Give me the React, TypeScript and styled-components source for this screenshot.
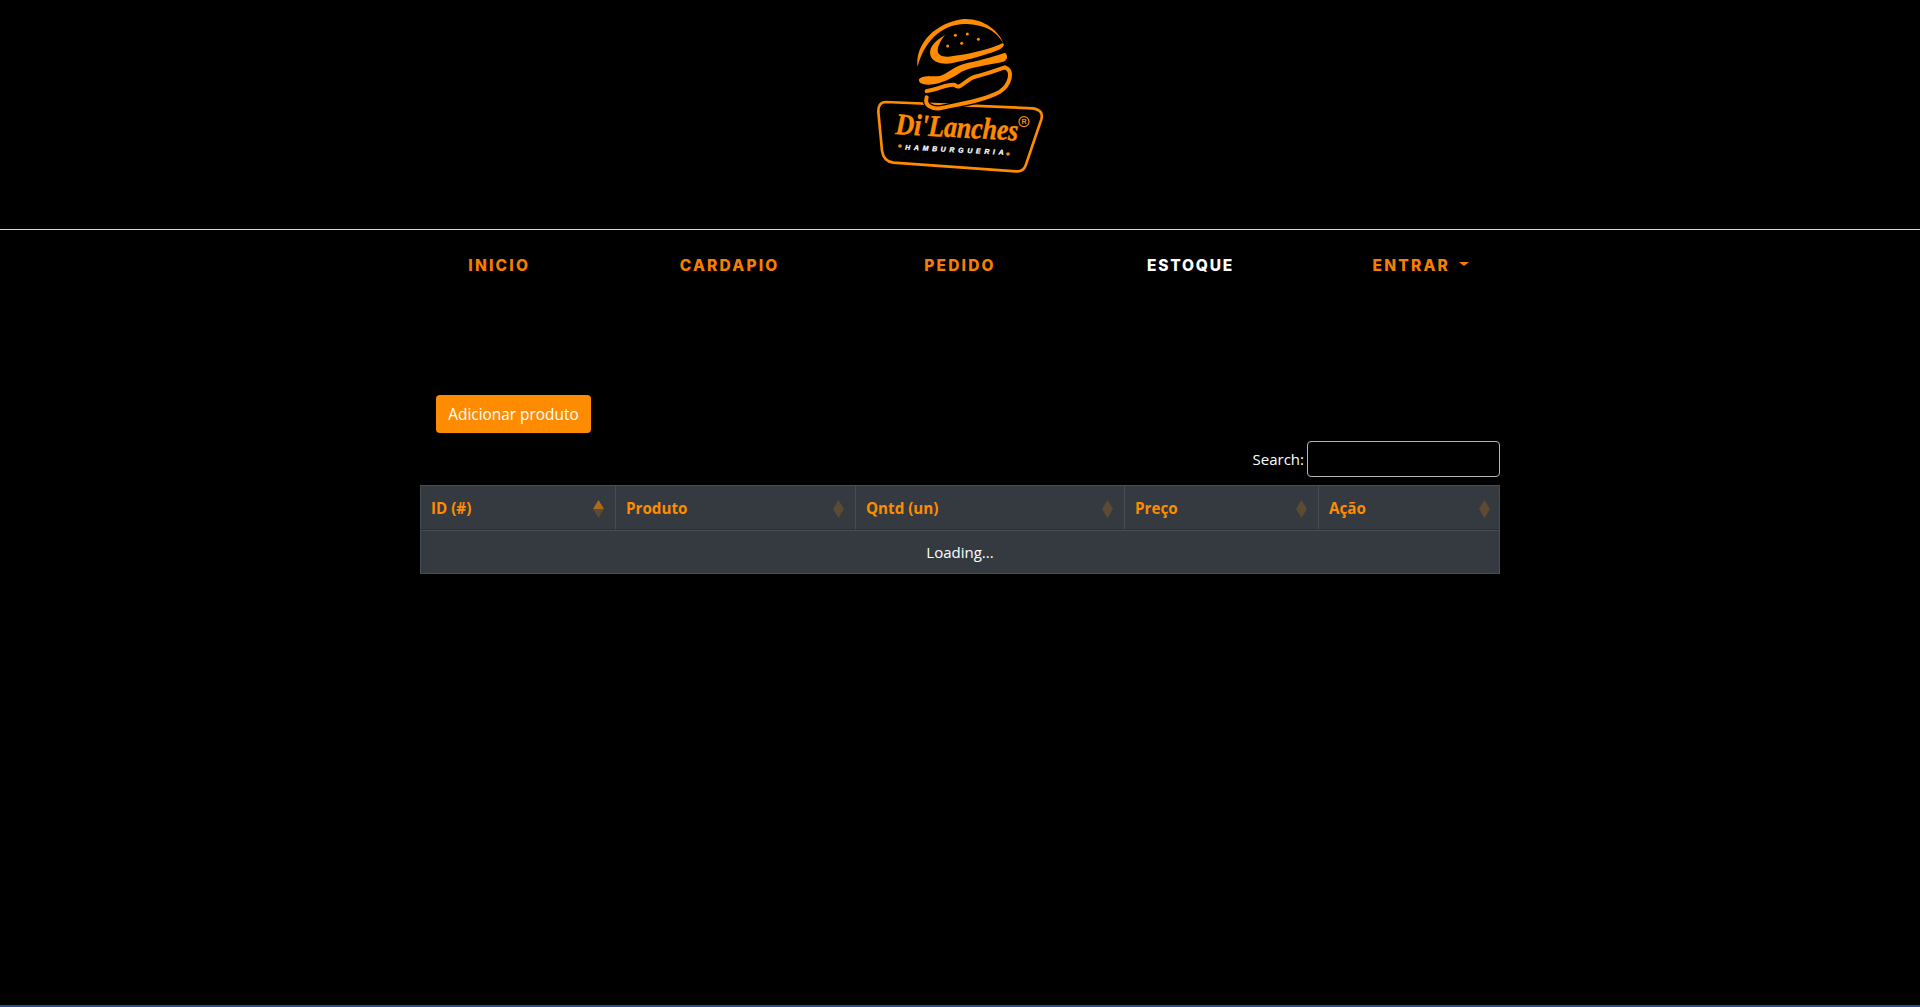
import React from 'react'
import styled, { createGlobalStyle } from 'styled-components'

const orange = '#ff8c00'
const bodyFont = '"Open Sans", "Noto Sans", sans-serif'

const GlobalStyle = createGlobalStyle`
  html, body {
    margin: 0;
    padding: 0;
    background: #000;
  }
  * {
    box-sizing: border-box;
  }
`
const Page = styled.div`
  min-height: 100vh;
  display: flex;
  flex-direction: column;
  background: #000;
  color: #fff;
  font-family: ${bodyFont};
`
const Header = styled.header`
  height: 230px;
  display: flex;
  justify-content: center;
  border-bottom: 1px solid #d8d8d8;
`
const Nav = styled.nav`
  width: 1152px;
  height: 70px;
  margin: 0 auto;
  display: flex;
  align-items: center;
`
const NavItem = styled.a<{ $active?: boolean }>`
  flex: 1;
  display: flex;
  align-items: center;
  justify-content: center;
  gap: 9px;
  font-family: Inter, sans-serif;
  font-weight: 800;
  font-size: 15.5px;
  letter-spacing: ${(p) => (p.$active ? '1.8px' : '2.2px')};
  color: ${(p) => (p.$active ? '#fff' : '#f77f00')};
`
const Caret = styled.span`
  width: 0;
  height: 0;
  border-left: 5px solid transparent;
  border-right: 5px solid transparent;
  border-top: 4px solid #f77f00;
  margin-bottom: 3px;
`
const Content = styled.main`
  width: 1080px;
  margin: 95px auto 0;
`
const AddButton = styled.button`
  display: block;
  width: 155px;
  height: 38px;
  margin-left: 16px;
  padding: 0;
  border: 0;
  border-radius: 4px;
  background: ${orange};
  color: #fff;
  font-family: ${bodyFont};
  font-size: 15.4px;
`
const SearchRow = styled.div`
  display: flex;
  justify-content: flex-end;
  align-items: center;
  gap: 3px;
  height: 36px;
  margin: 8px 0 8px;
  font-size: 15px;
`
const SearchInput = styled.input`
  width: 193px;
  height: 36px;
  padding: 0 8px;
  background: #000;
  border: 1px solid #b5b5b5;
  border-radius: 4px;
  color: #fff;
`
const Table = styled.table`
  width: 1079px;
  table-layout: fixed;
  border-collapse: separate;
  border-spacing: 0;
  background: #343a40;
  border-right: 1px solid #454d55;
  border-bottom: 1px solid #454d55;
`
const SortIcon = styled.svg`
  position: absolute;
  top: 14px;
  right: 11px;
  width: 11px;
  height: 18px;
`
const HeadCell = styled.th<{ $width: number }>`
  position: relative;
  width: ${(p) => p.$width}px;
  height: 45px;
  padding: 0 10px;
  text-align: left;
  color: ${orange};
  font-size: 15.2px;
  font-weight: 700;
  border-left: 1px solid #454d55;
  border-top: 1px solid #454d55;
  border-bottom: 1px solid #2b3035;

  &:last-child ${SortIcon} {
    right: 9px;
  }
`
const BodyCell = styled.td`
  height: 43px;
  text-align: center;
  font-size: 15px;
  color: #fff;
  border-left: 1px solid #454d55;
  border-top: 1px solid #454d55;
`
const FooterLine = styled.div`
  height: 2px;
  margin-top: auto;
  background: #234b9e;
`

const pattyPath =
  'M200 292 C192 316 215 328 240 325 C300 312 370 302 420 275 C450 255 462 212 435 202 C405 212 375 224 345 230 C320 235 300 272 285 255 C260 250 235 270 200 273'

const Logo = () => (
  <svg width="200" height="190" viewBox="0 0 600 570" aria-label="Di'Lanches Hamburgueria">
    {/* placa */}
    <path
      d="M78 306 L518 325 Q552 330 544 358 L497 496 Q490 516 468 514 L100 488 Q70 484 66 452 L55 336 Q54 306 78 306 Z"
      fill="none"
      stroke="#ff8c00"
      strokeWidth="8"
    />
    {/* pao */}
    <path
      d="M173 200 C165 150 205 75 305 58 C365 52 415 90 430 130 C405 85 360 72 310 72 C240 75 190 130 173 200 Z"
      fill="#ff8c00"
    />
    <path
      d="M255 105 C230 120 205 140 211 165 C215 185 245 195 275 190 C325 180 395 160 420 148 C435 138 433 130 427 130 C385 150 315 165 265 170 C230 172 220 150 255 105 Z"
      fill="#ff8c00"
    />
    <circle cx="286" cy="106" r="4.5" fill="#ff8c00" />
    <circle cx="322" cy="102" r="4.5" fill="#ff8c00" />
    <circle cx="355" cy="118" r="4.5" fill="#ff8c00" />
    <circle cx="305" cy="130" r="4.5" fill="#ff8c00" />
    <circle cx="263" cy="138" r="4.5" fill="#ff8c00" />
    {/* queijo */}
    <path
      d="M177 238 C185 225 220 230 240 228 C265 220 285 195 325 188 C365 180 415 165 435 158 C445 165 443 180 430 185 C385 195 335 200 305 215 C275 235 245 252 205 254 C185 254 175 248 177 238 Z"
      fill="#ff8c00"
    />
    {/* carne */}
    <path d={pattyPath} fill="none" stroke="#000" strokeWidth="20" strokeLinejoin="round" />
    <path d={pattyPath} fill="none" stroke="#ff8c00" strokeWidth="12" strokeLinecap="round" strokeLinejoin="round" />
    <text
      x="106"
      y="402"
      transform="rotate(3 106 402)"
      fontFamily="'Liberation Serif', serif"
      fontWeight="700"
      fontStyle="italic"
      fontSize="90"
      fill="#ff8c00"
      stroke="#ff8c00"
      strokeWidth="1.5"
      textLength="368"
      lengthAdjust="spacingAndGlyphs"
    >
      Di'Lanches
    </text>
    <circle cx="492" cy="365" r="15" fill="none" stroke="#ff8c00" strokeWidth="3.5" />
    <text x="492" y="373" textAnchor="middle" fontFamily="'Liberation Sans', sans-serif" fontSize="21" fontWeight="700" fill="#ff8c00">
      R
    </text>
    <circle cx="120" cy="438" r="5.5" fill="#ff8c00" />
    <text
      x="135"
      y="449"
      transform="rotate(3 135 449)"
      fontFamily="'Liberation Sans', sans-serif"
      fontWeight="700"
      fontStyle="italic"
      fontSize="21"
      fill="#fff"
      stroke="#fff"
      strokeWidth="0.8"
      textLength="296"
    >
      HAMBURGUERIA
    </text>
    <circle cx="444" cy="462" r="5.5" fill="#ff8c00" />
  </svg>
)

const Sort = ({ active }: { active?: boolean }) => (
  <SortIcon viewBox="0 0 11 18">
    <path d="M5.5 0 L11 9 H0 Z" fill={orange} opacity={active ? 0.6 : 0.2} />
    <path d="M5.5 18 L11 9 H0 Z" fill={orange} opacity="0.2" />
  </SortIcon>
)

const columns = [
  { label: 'ID (#)', width: 195, active: true },
  { label: 'Produto', width: 240 },
  { label: 'Qntd (un)', width: 269 },
  { label: 'Preço', width: 194 },
  { label: 'Ação', width: 181 },
]

const App = () => {
  return (
    <Page>
      <GlobalStyle />
      <Header>
        <div>
          <Logo />
        </div>
      </Header>
      <Nav>
        <NavItem>INICIO</NavItem>
        <NavItem>CARDAPIO</NavItem>
        <NavItem>PEDIDO</NavItem>
        <NavItem $active>ESTOQUE</NavItem>
        <NavItem>
          ENTRAR <Caret />
        </NavItem>
      </Nav>
      <Content>
        <AddButton type="button">Adicionar produto</AddButton>
        <SearchRow>
          <label htmlFor="search">Search:</label>
          <SearchInput id="search" type="search" />
        </SearchRow>
        <Table>
          <thead>
            <tr>
              {columns.map((c) => (
                <HeadCell key={c.label} $width={c.width}>
                  {c.label}
                  <Sort active={c.active} />
                </HeadCell>
              ))}
            </tr>
          </thead>
          <tbody>
            <tr>
              <BodyCell colSpan={5}>Loading...</BodyCell>
            </tr>
          </tbody>
        </Table>
      </Content>
      <FooterLine />
    </Page>
  )
}

export default App
